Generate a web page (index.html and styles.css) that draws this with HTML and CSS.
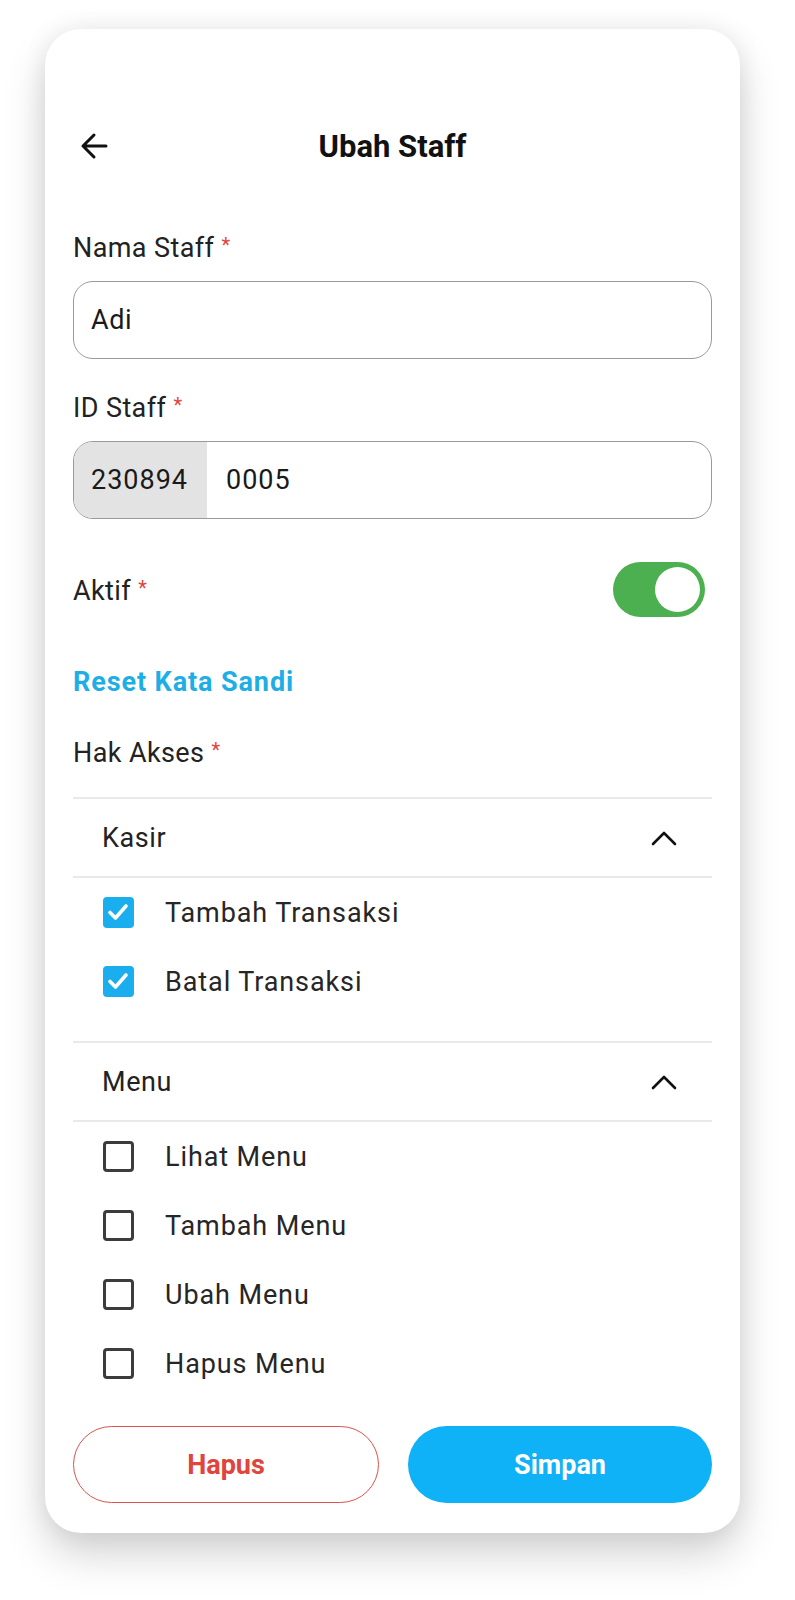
FILE: index.html
```html
<!DOCTYPE html>
<html lang="id">
<head>
    <meta charset="UTF-8">
    <meta name="viewport" content="width=device-width, initial-scale=1.0">
    <title>Ubah Staff</title>
    <link rel="stylesheet" href="styles.css">
</head>
<body>
    <div class="screen">
        <header class="topbar">
            <button class="back" aria-label="Kembali">
                <svg width="30" height="30" viewBox="0 0 30 30">
                    <path d="M27 15H4M15 4L4 15l11 11" fill="none" stroke="#111" stroke-width="3" stroke-linecap="round" stroke-linejoin="round"/>
                </svg>
            </button>
            <h1>Ubah Staff</h1>
        </header>

        <div class="form">
            <div class="field">
                <label>Nama Staff <span class="req">*</span></label>
                <div class="input">Adi</div>
            </div>

            <div class="field">
                <label>ID Staff <span class="req">*</span></label>
                <div class="input with-prefix">
                    <span class="prefix">230894</span>
                    <span class="value">0005</span>
                </div>
            </div>

            <div class="switch-row">
                <label>Aktif <span class="req">*</span></label>
                <span class="toggle on"><span class="knob"></span></span>
            </div>

            <a class="link" href="#">Reset Kata Sandi</a>

            <label class="access-label">Hak Akses <span class="req">*</span></label>

            <div class="group">
                <div class="group-head">
                    <span>Kasir</span>
                    <svg class="chevron" width="28" height="16" viewBox="0 0 28 16">
                        <path d="M3 14L14 3l11 11" fill="none" stroke="#111" stroke-width="2.6" stroke-linecap="round" stroke-linejoin="round"/>
                    </svg>
                </div>
                <ul class="checks">
                    <li><span class="box checked"><svg width="30" height="30" viewBox="0 0 30 30"><path d="M7 15.5l5.5 5.5 10.5-12" fill="none" stroke="#fff" stroke-width="3.6" stroke-linecap="round" stroke-linejoin="round"/></svg></span>Tambah Transaksi</li>
                    <li><span class="box checked"><svg width="30" height="30" viewBox="0 0 30 30"><path d="M7 15.5l5.5 5.5 10.5-12" fill="none" stroke="#fff" stroke-width="3.6" stroke-linecap="round" stroke-linejoin="round"/></svg></span>Batal Transaksi</li>
                </ul>
            </div>

            <div class="group">
                <div class="group-head">
                    <span>Menu</span>
                    <svg class="chevron" width="28" height="16" viewBox="0 0 28 16">
                        <path d="M3 14L14 3l11 11" fill="none" stroke="#111" stroke-width="2.6" stroke-linecap="round" stroke-linejoin="round"/>
                    </svg>
                </div>
                <ul class="checks last">
                    <li><span class="box"></span>Lihat Menu</li>
                    <li><span class="box"></span>Tambah Menu</li>
                    <li><span class="box"></span>Ubah Menu</li>
                    <li><span class="box"></span>Hapus Menu</li>
                </ul>
            </div>
        </div>

        <div class="actions">
            <button class="btn btn-outline">Hapus</button>
            <button class="btn btn-primary">Simpan</button>
        </div>
    </div>
</body>
</html>
```

FILE: styles.css
```css
body {
    margin: 0;
    background-color: #ffffff;
    font-family: 'Roboto', 'Liberation Sans', sans-serif;
    color: #1f1f1f;
}

.screen {
    width: 695px;
    margin: 29px 0 68px 45px;
    padding: 88px 28px 30px;
    box-sizing: border-box;
    background-color: white;
    border-radius: 36px;
    box-shadow: 0 22px 42px rgba(0, 0, 0, 0.17), 0 0 26px rgba(0, 0, 0, 0.08);
}

.topbar {
    position: relative;
    height: 58px;
    display: flex;
    align-items: center;
    justify-content: center;
}

.back {
    position: absolute;
    left: 6px;
    top: 14px;
    padding: 0;
    border: none;
    background: none;
    display: flex;
}

.topbar h1 {
    margin: 0;
    font-size: 31px;
    font-weight: 700;
    color: #111;
}

label {
    display: block;
    font-size: 27px;
    line-height: 32px;
    color: #222;
    letter-spacing: 0.4px;
}

.req {
    color: #e0443c;
    font-size: 20px;
    vertical-align: 5px;
}

.field {
    margin-top: 54px;
}

.field + .field {
    margin-top: 30px;
}

.input {
    margin-top: 17px;
    height: 78px;
    box-sizing: border-box;
    border: 1.5px solid #9a9a9a;
    border-radius: 20px;
    display: flex;
    align-items: center;
    padding: 0 17px;
    font-size: 27px;
    letter-spacing: 0.6px;
    color: #1a1a1a;
    overflow: hidden;
}

.input.with-prefix {
    padding: 0;
}

.prefix {
    align-self: stretch;
    display: flex;
    align-items: center;
    width: 133px;
    box-sizing: border-box;
    padding-left: 17px;
    background-color: #e3e3e3;
    letter-spacing: 1px;
}

.value {
    padding-left: 19px;
    letter-spacing: 1px;
}

.switch-row {
    margin-top: 43px;
    height: 55px;
    display: flex;
    align-items: center;
    justify-content: space-between;
}

.toggle {
    width: 92px;
    height: 55px;
    margin-right: 7px;
    border-radius: 28px;
    background-color: #4caf50;
    display: flex;
    align-items: center;
    justify-content: flex-end;
    padding: 0 5px;
    box-sizing: border-box;
}

.knob {
    width: 45px;
    height: 45px;
    border-radius: 50%;
    background-color: white;
}

.link {
    display: block;
    margin-top: 49px;
    font-size: 27px;
    line-height: 32px;
    font-weight: 700;
    color: #1eaee6;
    text-decoration: none;
    letter-spacing: 0.9px;
}

.access-label {
    margin-top: 36px;
}

.group {
    border-top: 2px solid #e9e9e9;
}

.access-label + .group {
    margin-top: 28px;
}

.group-head {
    height: 77px;
    padding: 0 34px 0 29px;
    display: flex;
    align-items: center;
    justify-content: space-between;
    border-bottom: 2px solid #e9e9e9;
    font-size: 27px;
    letter-spacing: 0.6px;
    color: #222;
}

.checks {
    list-style: none;
    margin: 0;
    padding: 0 0 25px;
}

.checks.last {
    padding-bottom: 0;
}

.checks li {
    height: 69px;
    display: flex;
    align-items: center;
    padding-left: 30px;
    font-size: 27px;
    color: #262626;
    letter-spacing: 0.9px;
}

.box {
    width: 31px;
    height: 31px;
    margin-right: 31px;
    box-sizing: border-box;
    border: 3px solid #3c3c3c;
    border-radius: 4px;
    flex-shrink: 0;
}

.box.checked {
    border: none;
    background-color: #1aaeef;
}

.box svg {
    display: block;
}

.actions {
    margin-top: 28px;
    display: flex;
    gap: 29px;
}

.btn {
    flex: 1;
    height: 77px;
    border-radius: 40px;
    font-family: inherit;
    font-size: 27px;
    font-weight: 700;
    cursor: pointer;
}

.btn-outline {
    background-color: white;
    border: 1.5px solid #d9544c;
    color: #e0443c;
}

.btn-primary {
    background-color: #0fb2f6;
    border: none;
    color: white;
}
```
